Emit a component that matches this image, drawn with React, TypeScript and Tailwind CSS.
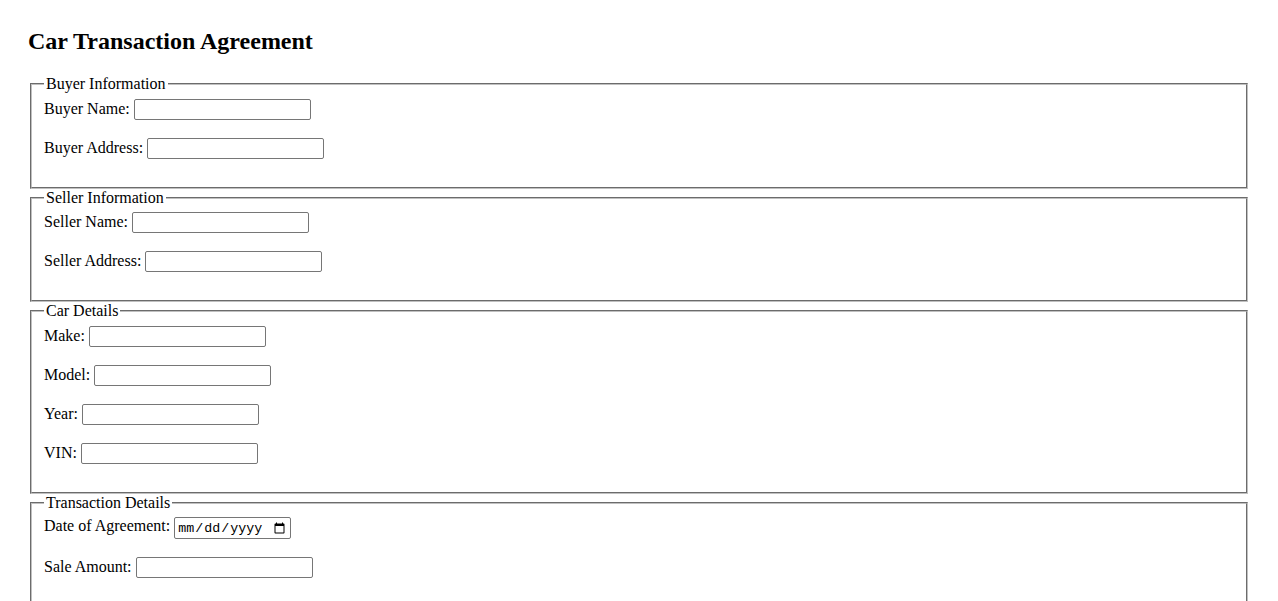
import React from "react";

const inputCls =
  "inline-block align-baseline w-[177px] h-[21px] border border-[#767676] rounded-[2px] px-[2px] py-[1px] bg-white text-[13.333px] leading-[normal] font-['Liberation_Sans',Arial,sans-serif] text-black";

function Row({ label, type = "text" }: { label: string; type?: string }) {
  return (
    <>
      <label>{label}</label>{" "}
      {type === "date" ? (
        <input
          type="date"
          className="inline-block align-baseline w-[117px] h-[22px] border border-[#767676] rounded-[2px] px-[2px] py-[1px] bg-white text-[13.333px] leading-[normal] font-['Liberation_Mono','DejaVu_Sans_Mono',monospace] text-black"
        />
      ) : (
        <input type="text" className={inputCls} />
      )}
      <br />
      <br />
    </>
  );
}

function Section({ title, children }: { title: string; children: React.ReactNode }) {
  return (
    <fieldset className="mx-[2px] border-2 [border-style:groove] border-[#c0c0c0] px-[12px] pt-[5.6px] pb-[10px] min-w-min">
      <legend className="px-[2px]">{title}</legend>
      {children}
    </fieldset>
  );
}

export default function App() {
  return (
    <div className="bg-white text-black text-[16px] leading-[normal] font-['Liberation_Serif','Times_New_Roman',serif] px-[28px] pt-[28px] pb-[28px] min-h-screen">
      <h2 className="text-[24px] leading-[normal] font-bold mb-[19.92px]">Car Transaction Agreement</h2>
      <form>
        <Section title="Buyer Information">
          <Row label="Buyer Name:" />
          <Row label="Buyer Address:" />
        </Section>
        <Section title="Seller Information">
          <Row label="Seller Name:" />
          <Row label="Seller Address:" />
        </Section>
        <Section title="Car Details">
          <Row label="Make:" />
          <Row label="Model:" />
          <Row label="Year:" />
          <Row label="VIN:" />
        </Section>
        <Section title="Transaction Details">
          <Row label="Date of Agreement:" type="date" />
          <Row label="Sale Amount:" />
        </Section>
      </form>
    </div>
  );
}
